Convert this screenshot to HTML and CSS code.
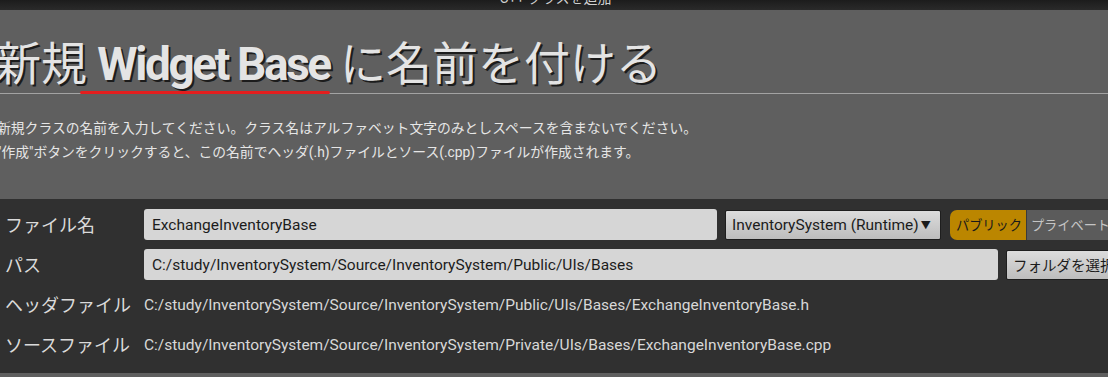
FILE: index.html
```html
<!DOCTYPE html>
<html lang="ja">

<head>
    <meta charset="UTF-8">
    <meta name="viewport" content="width=device-width, initial-scale=1.0">
    <title>C++ クラスを追加</title>

    <link rel="stylesheet" href="styles.css">
</head>

<body>

    <div class="dialog_main">
        <div class="dialog_titlebar">
            <span class="dialog_titlebar_text">C++ クラスを追加</span>
        </div>

        <div class="dialog_header">
            <h1 class="dialog_title">新規 <span class="dialog_title_class">Widget Base</span> に名前を付ける</h1>
            <div class="dialog_rule"></div>
            <div class="dialog_marker"></div>
            <p class="dialog_desc">
                新規クラスの名前を入力してください。クラス名はアルファベット文字のみとしスペースを含まないでください。<br>
                "作成"ボタンをクリックすると、この名前でヘッダ(.h)ファイルとソース(.cpp)ファイルが作成されます。
            </p>
        </div>

        <div class="dialog_form">
            <div class="form_row">
                <label class="form_label" for="className">ファイル名</label>
                <input class="form_input form_input_name" type="text" id="className" value="ExchangeInventoryBase">
                <button class="form_button form_dropdown" type="button">InventorySystem (Runtime)<span class="dropdown_arrow">▼</span></button>
                <div class="form_toggle">
                    <span class="toggle_item toggle_on">パブリック</span>
                    <span class="toggle_item toggle_off">プライベート</span>
                </div>
            </div>

            <div class="form_row">
                <label class="form_label" for="classPath">パス</label>
                <input class="form_input form_input_path" type="text" id="classPath" value="C:/study/InventorySystem/Source/InventorySystem/Public/UIs/Bases">
                <button class="form_button form_folder" type="button">フォルダを選択</button>
            </div>

            <div class="form_row">
                <span class="form_label">ヘッダファイル</span>
                <span class="form_value">C:/study/InventorySystem/Source/InventorySystem/Public/UIs/Bases/ExchangeInventoryBase.h</span>
            </div>

            <div class="form_row">
                <span class="form_label">ソースファイル</span>
                <span class="form_value">C:/study/InventorySystem/Source/InventorySystem/Private/UIs/Bases/ExchangeInventoryBase.cpp</span>
            </div>
        </div>

        <div class="dialog_footer"></div>
    </div>

</body>

</html>
```

FILE: styles.css
```css
/* 基本設定 */
* {
    box-sizing: border-box;
    margin: 0;
    padding: 0;
}

html,
body {
    width: 100%;
    height: 100%;
    background-color: #5f5f5f;
    color: #e0e0e0;
    font-family: Roboto, "Noto Sans CJK JP", sans-serif;
    overflow: hidden;
}

.dialog_main {
    display: flex;
    flex-direction: column;
    width: 100%;
    position: relative;
}

/* ウィンドウタイトル (上端で切れている) */
.dialog_titlebar {
    height: 10px;
    overflow: hidden;
    background: linear-gradient(#1c1c1c, #2a2a2a);
    display: flex;
    justify-content: center;
    padding-left: 3px;
}

.dialog_titlebar_text {
    font-size: 14px;
    line-height: 14px;
    margin-top: -9px;
    color: #d0d0d0;
}

/* ヘッダー */
.dialog_header {
    background-color: #5f5f5f;
    padding: 22px 0 35px 0;
}

.dialog_title {
    height: 56px;
    font-family: "Noto Sans CJK JP", sans-serif;
    font-size: 46px;
    line-height: 56px;
    font-weight: 400;
    color: #e4e4e4;
    margin-left: -5px;
    white-space: nowrap;
    text-shadow: 2px 2px 0 #1c1c1c;
}

.dialog_title_class {
    font-family: Roboto, sans-serif;
    font-weight: 700;
    line-height: 56px;
    letter-spacing: -2.4px;
}

.dialog_rule {
    height: 1px;
    margin-top: 5px;
    background-color: #a3a3a3;
}

/* 赤い下線 (注釈) */
.dialog_marker {
    position: absolute;
    left: 80px;
    top: 91px;
    width: 250px;
    height: 3px;
    border-radius: 2px;
    background-color: #e31e1e;
}

.dialog_desc {
    margin-top: 22px;
    margin-left: -3px;
    font-size: 13.8px;
    line-height: 24px;
    color: #e6e6e6;
    white-space: nowrap;
}

/* 入力フォーム */
.dialog_form {
    background-color: #303030;
    padding: 10px 0 13px 0;
    display: flex;
    flex-direction: column;
    gap: 9px;
}

.form_row {
    display: flex;
    align-items: center;
    height: 31px;
    white-space: nowrap;
}

.form_row > * {
    flex-shrink: 0;
}

.form_label {
    flex: 0 0 144px;
    padding-left: 5px;
    font-family: "Noto Sans CJK JP", sans-serif;
    font-size: 18px;
    line-height: 31px;
    color: #dadada;
}

.form_input {
    height: 31px;
    border: none;
    border-radius: 3px;
    background-color: #d6d6d6;
    color: #1c1c1c;
    font-family: Roboto, sans-serif;
    font-size: 15.5px;
    padding: 0 8px;
    outline: none;
}

.form_input_name {
    width: 573px;
}

.form_input_path {
    width: 854px;
}

.form_button {
    height: 30px;
    border: 1px solid #1e1e1e;
    border-radius: 2px;
    background: linear-gradient(#dcdcdc, #bdbdbd);
    color: #1c1c1c;
    font-family: Roboto, "Noto Sans CJK JP", sans-serif;
    font-size: 15.5px;
    padding: 0 6px;
    display: flex;
    align-items: center;
}

.form_dropdown {
    width: 216px;
    margin-left: 8px;
}

.dropdown_arrow {
    font-size: 10px;
    margin-left: 2px;
}

.form_folder {
    margin-left: 8px;
    font-size: 14.5px;
}

/* パブリック / プライベート 切替 */
.form_toggle {
    display: flex;
    height: 30px;
    margin-left: 9px;
}

.toggle_item {
    display: flex;
    align-items: center;
    padding: 0 4px;
    font-family: "Noto Sans CJK JP", sans-serif;
    font-size: 13.2px;
}

.toggle_on {
    background-color: #bb8600;
    color: #1a1a1a;
    border-radius: 7px 0 0 7px;
    padding-left: 6px;
    border-right: 1px solid #3a3a3a;
}

.toggle_off {
    background-color: #5b5b5b;
    color: #c4c4c4;
}

.form_value {
    font-size: 15.5px;
    color: #d8d8d8;
}

.dialog_footer {
    height: 4px;
    background-color: #5f5f5f;
}
```
